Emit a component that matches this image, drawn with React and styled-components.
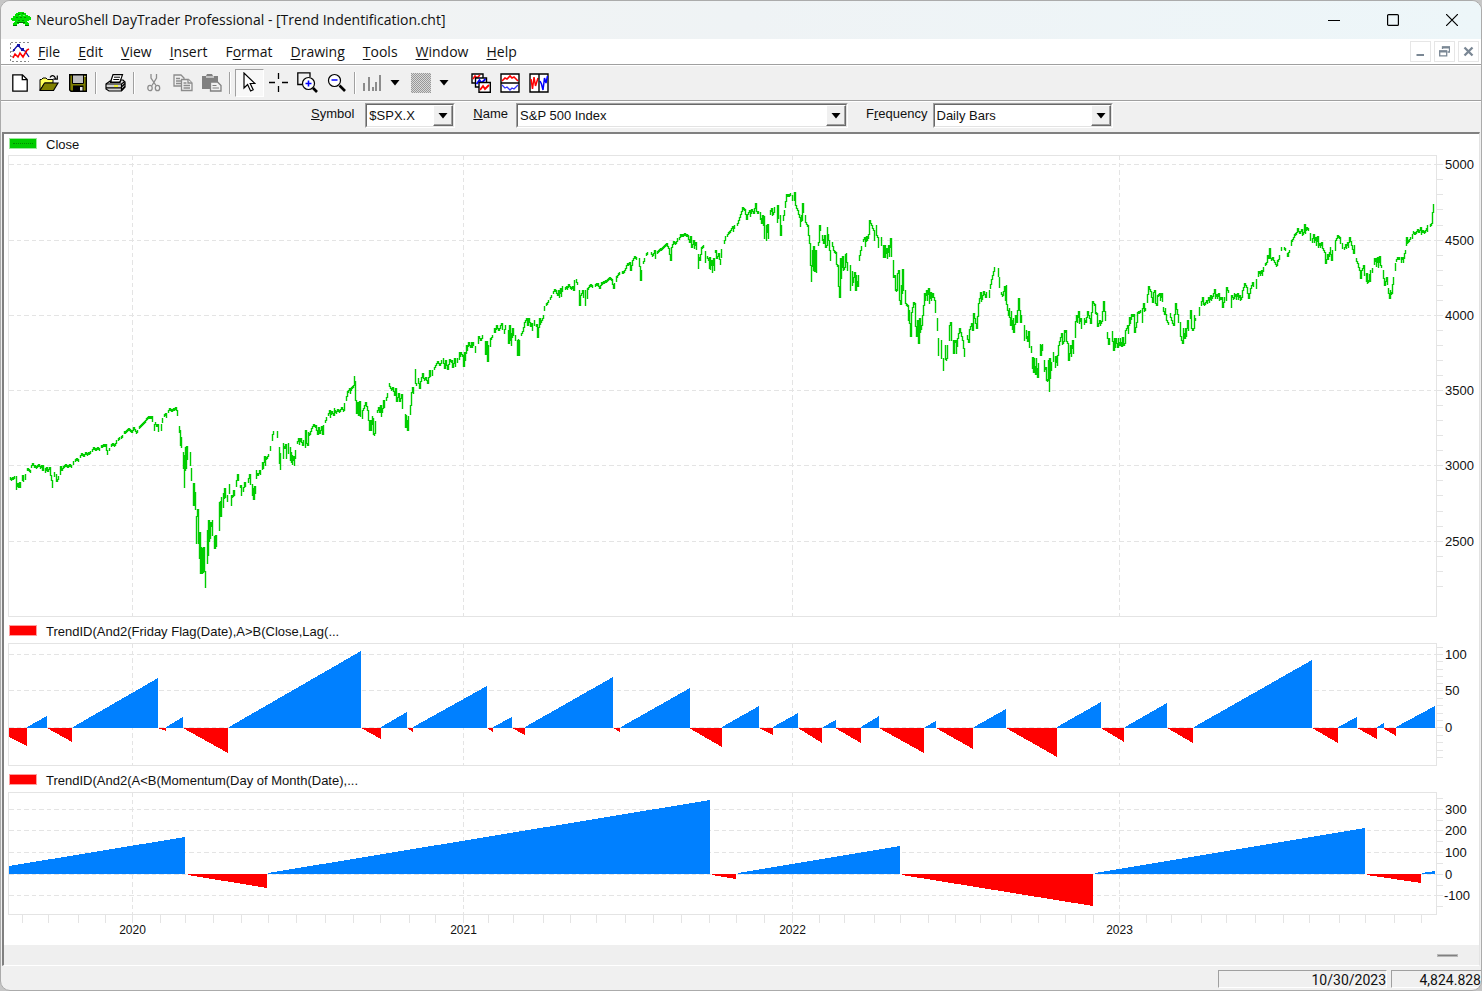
import React from "react";
import styled, { createGlobalStyle } from "styled-components";

// Color scheme
const faceColor = "#f0f0f0"; // toolbar and status bar grey
const shadowColor = "#a0a0a0"; // light edge of sunken borders
const darkShadow = "#696969"; // dark edge of sunken borders
const gridColor = "#e4e4e4"; // chart frames and grid lines
const priceColor = "#00cc00";
const upColor = "#0080ff";
const downColor = "#ff0000";

const uiFont = `"Open Sans", "Noto Sans", sans-serif`;
const chartFont = `"Liberation Sans", Arial, sans-serif`;

const GlobalStyle = createGlobalStyle`
  * {
    box-sizing: border-box;
  }

  body {
    margin: 0;
    background: #c6c6c6;
  }

  button,
  select {
    font: inherit;
    color: inherit;
  }
`;

// Window chrome
const AppWindow = styled.div`
  display: flex;
  flex-direction: column;
  min-height: 100vh;
  border: 1px solid #ababab;
  border-radius: 10px;
  background: ${faceColor};
  color: #111;
  font-family: ${uiFont};
  overflow: hidden;
`;

const TitleBar = styled.header`
  display: flex;
  align-items: center;
  height: 38px;
  padding-left: 10px;
  background: linear-gradient(90deg, #f3f3f3, #eff3f5 50%, #edf6f9);
`;

const Title = styled.h1`
  flex: 1;
  margin: 0 0 0 5px;
  font-size: 14px;
  font-weight: 400;
  line-height: 20px;
`;

const CaptionButton = styled.button`
  display: flex;
  align-items: center;
  justify-content: center;
  width: 59px;
  height: 38px;
  padding: 0;
  border: 0;
  background: transparent;
`;

const MenuBar = styled.nav`
  display: flex;
  align-items: center;
  height: 25px;
  padding: 0 2px 0 9px;
  background: #fff;
`;

const MenuItem = styled.button`
  padding: 0 10px 0 8px;
  border: 0;
  background: transparent;
  font-size: 14px;
  line-height: 20px;

  u {
    text-underline-offset: 2px;
  }
`;

const ChildButtons = styled.div`
  display: flex;
  gap: 3px;
  margin-left: auto;
`;

const ChildButton = styled.button`
  display: flex;
  align-items: center;
  justify-content: center;
  width: 21px;
  height: 21px;
  padding: 0;
  border: 1px solid #e6e6e6;
  background: #fff;
`;

// Toolbar
const Toolbar = styled.div`
  display: flex;
  align-items: center;
  height: 36px;
  padding-left: 4px;
  border-top: 1px solid ${shadowColor};
  box-shadow: inset 0 1px 0 #fff;
`;

const ToolButton = styled.button`
  display: flex;
  align-items: center;
  justify-content: center;
  width: ${({ $width }) => $width || 29}px;
  height: 28px;
  padding: 0;
  border: 1px solid;
  border-color: ${({ $pressed }) =>
    $pressed ? `${shadowColor} #fff #fff ${shadowColor}` : "transparent"};
  background: ${({ $pressed }) => ($pressed ? "#f8f8f8" : "transparent")};
`;

const Divider = styled.span`
  width: 2px;
  height: 22px;
  margin: 0 4px 0 3px;
  border-left: 1px solid ${shadowColor};
  border-right: 1px solid #fff;
`;

const ToolGap = styled.span`
  width: 13px;
`;

// Symbol bar
const SymbolBar = styled.div`
  display: flex;
  align-items: flex-start;
  height: 32px;
  padding: 2px 0 0 310px;
  border-top: 1px solid ${shadowColor};
  box-shadow: inset 0 1px 0 #fff;
  font-family: ${chartFont};
  font-size: 13px;
`;

const Field = styled.div`
  display: flex;
  margin-right: ${({ $gap }) => $gap}px;
`;

const FieldLabel = styled.label`
  margin-right: ${({ $gap }) => $gap}px;
  line-height: 22px;
`;

const Combo = styled.div`
  position: relative;
  width: ${({ $width }) => $width}px;
  height: 25px;
  border: 1px solid;
  border-color: ${shadowColor} #fff #fff ${shadowColor};
`;

const ComboSelect = styled.select`
  display: block;
  width: 100%;
  height: 23px;
  padding: 0 24px 0 2px;
  border: 1px solid;
  border-color: ${darkShadow} #e3e3e3 #e3e3e3 ${darkShadow};
  border-radius: 0;
  background: #fff;
  appearance: none;
  line-height: 20px;
`;

const ComboArrow = styled.span`
  position: absolute;
  top: 1px;
  right: 1px;
  display: flex;
  align-items: center;
  justify-content: center;
  width: 20px;
  height: 21px;
  border: 1px solid;
  border-color: #fff ${darkShadow} ${darkShadow} #fff;
  box-shadow: inset -1px -1px 0 ${shadowColor};
  background: ${faceColor};
  pointer-events: none;
`;

// Chart workspace
const Workspace = styled.main`
  flex: 1;
  display: flex;
  flex-direction: column;
  border-top: 2px solid #808080;
  border-left: 2px solid #808080;
  border-right: 1px solid #e3e3e3;
  border-bottom: 1px solid #fff;
  margin: 0 1px;
  background: #fff;
  font-family: ${chartFont};
`;

const Legend = styled.div`
  display: flex;
  align-items: center;
  gap: 9px;
  height: ${({ $first }) => ($first ? 21 : 26)}px;
  padding: ${({ $first }) => ($first ? 0 : 3)}px 0 0 5px;
  font-size: 13px;
  line-height: 20px;
`;

const Swatch = styled.span`
  display: flex;
  align-items: center;
  width: 28px;
  height: 11px;
  margin-bottom: 3px;
  border: 1px solid ${({ $color }) => ($color === priceColor ? "#9be89b" : "#ff9d9d")};
  background: ${({ $color }) => $color};

  &::after {
    content: "";
    flex: 1;
    margin: 0 3px;
    border-top: 1px dotted ${({ $color }) => ($color === priceColor ? "#008a00" : $color)};
  }
`;

const Panel = styled.section`
  display: flex;
  padding-left: 4px;
`;

const Plot = styled.svg`
  flex: 1;
  min-width: 0;
  height: ${({ $height }) => $height}px;
  display: block;
`;

const Scale = styled.svg`
  flex: none;
  width: 42px;
  height: ${({ $height }) => $height}px;
  display: block;
  font-family: ${chartFont};
  font-size: 13px;
`;

const TimeAxis = styled.svg`
  display: block;
  flex: 1;
  height: 30px;
  overflow: visible;
  font-family: ${chartFont};
  font-size: 12px;
`;

const AxisSpacer = styled.div`
  width: 42px;
`;

const ScrollStrip = styled.div`
  flex: 1;
  display: flex;
  align-items: center;
  justify-content: flex-end;
  min-height: 20px;
  padding-right: 21px;
  background: #efefef;
`;

const ScrollThumb = styled.span`
  width: 21px;
  height: 3px;
  border: 1px solid #b8b8b8;
  background: #808080;
`;

const StatusBar = styled.footer`
  display: flex;
  justify-content: flex-end;
  gap: 4px;
  height: 24px;
  padding-top: 4px;
  font-family: Roboto, ${chartFont};
  font-size: 14px;
`;

const StatusCell = styled.div`
  width: ${({ $width }) => $width}px;
  height: 18px;
  border: 1px solid;
  border-color: ${shadowColor} #fff #fff ${shadowColor};
  line-height: 18px;
  text-align: right;

  &:last-child {
    border-right: 0;
  }
`;

// Chart data. The horizontal range of every panel is 8 to 1437.
const LEFT = 8;
const SPAN = 1429;

const years = [
  { x: 132, label: "2020" },
  { x: 463, label: "2021" },
  { x: 792, label: "2022" },
  { x: 1119, label: "2023" },
];

const months = [
  22, 48, 78, 105, 132, 160, 185, 213, 241, 268, 296, 325, 353, 380, 409, 435,
  463, 488, 513, 543, 570, 596, 625, 653, 681, 709, 736, 764, 792, 819, 844,
  874, 900, 928, 955, 980, 1011, 1038, 1065, 1093, 1119, 1146, 1171, 1201,
  1226, 1255, 1283, 1309, 1339, 1365, 1394, 1421,
];

const pricePath = `
M10,477 L11,479 L13,477 L15,476 M16,476 V489 L18,483 L19,487 L20,482 V487 M22,480 L23,475 L24,481
M25,479 L26,474 M27,470 L28,468 L30,470 L31,472 M31,466 L33,463 L34,465 L37,466 L39,464 L40,466 L42,465
L43,470 L44,465 M45,468 V472 L47,467 L48,471 L50,467 L51,475 L52,480 L53,487 M54,476 L55,472 M56,474
L57,481 L59,476 M60,474 L61,466 L62,470 L64,466 L66,464 L68,466 L70,464 L72,465 M73,461 L74,464
M75,460 L77,458 L79,460 M80,457 L82,453 L84,455 L86,452 L88,453 L91,451 M92,450 L94,447 L96,449 L98,447
L100,449 M101,446 L104,444 L106,444 L107,450 L108,454 M109,450 L110,448 M111,444 L113,443 L115,445
L117,440 M118,439 L120,437 M121,436 L123,435 M124,432 L127,430 L129,428 L131,430 L132,432 L134,427
L136,431 L138,430 M139,427 L142,424 L144,422 L146,420 L147,418 L149,416 L152,416 L153,421 M154,430 V424
M155,422 L157,426 L158,424 L159,431 M161,430 V424 M162,422 L163,418 M164,415 L166,413 L167,417
M168,411 L170,408 L172,410 L174,408 L176,407 L177,410 L178,415
M179,426 V432 L180,430 V445 L181,437 V447 M183,452 V468 M184,487 V455 L185,470 L186,447 V468 L187,446
V459 M190,452 V465 M191,468 V480 M193,487 V505 L194,483 V505 L195,492 V509 M196,516 V543 L197,516
L198,509 V543 L199,532 V558 L200,532 V560 L201,573 V547 L202,573 L203,548 V572 L204,547 V571 M205,571 V587
M207,563 V548 L208,530 V555 L209,520 V541 L210,522 V538 L211,526 L212,522 V535 L213,520 M214,537 V548
L215,536 V548 L216,535 V546 M219,530 V514 L220,502 V516 L221,501 V516 L222,497 M223,493 V507 L225,488
V497 M227,495 V501 M229,484 V493 L230,486 M231,505 L232,495 L233,496 L234,490 L235,495 M236,486
L237,480 L238,474 L239,480 M240,485 L241,485 L242,495 M243,491 L245,482 L246,486 M248,482 L249,478
L250,474 L251,484 M252,484 V495 L253,488 V493 L254,499 L255,486 V493 M256,478 V470 L258,475 L260,470
L261,474 M262,469 L263,462 V468 L265,456 V465 M266,457 L268,456 L269,454 M270,450 L271,446 M272,440
L273,434 L274,431 M277,431 V437 M279,447 V463 L280,453 V467 L281,469 M283,458 V443 L285,448 L286,444
V458 M288,443 L289,453 M290,447 V460 L291,452 V462 L292,455 V464 L294,456 V465 L296,450 M297,443
L299,438 V444 L301,438 L303,445 L304,440 M305,447 L306,430 V440 L308,445 V432 L310,434 L312,428
L314,424 L316,425 L318,434 L319,427 L320,433 L322,426 L323,434 L324,425 M325,422 L327,417 M328,415
L330,410 V417 L332,411 L334,415 V408 L336,412 L338,409 L340,411 L342,407 L344,410 L345,403 M346,400
L348,391 L350,388 V393 L352,387 L354,385 V376 L355,381 V390 L356,400 L357,413 L358,402 L359,415
L360,401 V416 M362,418 L363,410 L365,405 L366,402 L368,410 L370,430 L371,420 V430 M372,416 V424
L373,418 V432 L375,433 L375,421 M377,412 L379,407 L380,412 L381,405 V416 L383,408 L384,400 L385,407
M386,400 L388,393 M389,383 L391,388 L393,387 L395,395 L396,388 L397,401 L399,393 L400,401 L402,394
L403,408 M405,414 V427 L406,415 V427 L407,420 L408,430 L409,416 M410,414 L411,405 L412,392 L413,387
L414,393 M415,369 V380 L417,385 M418,378 L420,388 L421,381 L423,373 L424,378 L426,377 L428,383
L430,370 V376 M432,375 L433,370 M434,369 L436,365 L438,361 L440,365 L442,360
M443,358 L445,368 L446,360 L448,369 L450,359 L452,360 L453,367 L455,358 V366 M457,358 L458,362
M459,359 L460,352 V356 L461,352 L463,355 L464,366 L465,352 V360 L467,345 V350 L469,342 L471,347
L472,342 V347 L474,342 M475,352 L476,346 M478,343 L479,336 L481,340 L483,335 M485,341 L486,354
L487,341 V353 L488,361 L489,345 M490,346 L491,338 L493,335 M494,332 L495,328 V332 L497,325 L499,330
L501,325 L502,323 L503,329 M504,333 L506,325 M508,330 L509,343 V326 L510,325 V340 L511,333 V345
L513,328 V335 L514,330 M515,335 V340 M517,340 L518,355 V339 L519,355 L520,340 M521,335 L523,331
L525,322 L527,318 L528,325 L529,318 L531,326 L532,323 V330 M534,320 V325 M536,325 L537,324 L538,337
L539,327 L540,318 V323 L542,320 L544,315 M544,310 L545,306 M546,304 L548,302 L549,300 M550,298
L552,295 M553,293 L555,289 L556,290 L558,295 L559,290 V297 L561,288 V296 L563,286 M565,287 L567,286
V289 L569,284 L571,288 L573,286 L574,290 L575,280 M576,279 L578,284 M579,290 L580,305 L581,295
L583,290 V297 M585,290 L586,305 M587,298 L588,288 L591,284 L593,286 M595,284 L598,283 L600,288
L602,282 L604,281 L606,280 L608,279 L610,277 L612,279 L614,288 L615,283 M616,281 L617,276 L620,272
M622,272 L625,270 L628,263 L630,262 L631,270 L633,260 L635,256 L637,258 M639,258 L640,266 L641,280
L642,270 M643,263 L645,258 M646,254 L648,252 M651,252 L653,255 L655,250 V258 M657,252 L659,250
L661,248 L663,247 L665,245 L667,243 L669,248 L671,260 L672,247 L674,241 L676,243 L678,238 M679,239
L681,234 L683,234 L685,233 L688,235 L690,242 L691,236 V245 L692,247 L694,240 V248 L696,242 V249
M698,268 V254 L700,260 L702,247 L704,245 M705,251 L706,262 M707,256 L709,260 V268 L710,257 V269
L712,260 V272 L714,258 V270 M715,252 L716,250 L717,258 L719,253 L721,264 M721,257 L722,249 M724,243
L726,236 M727,236 L729,232 L731,230 L733,226 V231 L735,225 M737,225 L739,220 L741,214 L743,207
L745,209 L747,219 L748,214 L750,210 V216 L752,209 L754,213 L756,203 L757,211 L759,211 M760,219 V212
L762,223 L763,215 V225 M764,238 V216 M766,225 V240 L768,224 V238 M770,210 V214 L772,208 V214 L774,212
L775,207 M777,213 V222 L778,205 V218 M780,215 V222 L781,235 L782,225 M783,220 L785,210 M785,207
L787,194 L788,195 L791,193 M792,200 V195 M794,193 V200 L795,192 L796,205 L798,210 L800,217 V226
L802,215 V220 L803,203 V212 M805,215 L806,222 L808,225 V232 L809,235 L810,243 L811,265 V281 L813,250
V270 L814,246 L815,271 L816,250 V272 M818,245 L819,242 L820,225 V230 M822,240 V235 L824,243 L825,235
V245 L827,245 V227 L829,240 L831,260 M832,242 L834,250 L836,252 V262 L838,265 V275 L840,297 V272
L841,258 V278 L843,256 V268 L845,267 V254 M846,253 L848,270 M850,265 V290 M852,285 V271 L853,282
L855,272 V285 L856,290 V275 L858,286 V275 M859,260 L861,250 L862,246 M863,240 L865,237 V246 L867,236
V240 M868,238 L869,234 L870,220 L872,225 L874,230 V240 M876,225 L877,235 L878,237 V247 M881,237 V245
M883,245 L884,257 L885,245 V257 L887,248 V258 L889,245 V256 L891,238 L892,256 M893,260 L894,277
L895,275 V288 L897,290 V275 L899,270 V296 L901,304 V285 M902,293 V286 L903,269 V290 M905,290 L906,303
L908,305 V320 M909,315 V310 L911,336 L912,312 L914,302 L915,303 V315 L917,336 L918,320 V330 L919,343
L920,318 V332 L922,325 L924,305 L925,293 V300 L927,290 V300 L929,288 V303 L931,292 V300 L933,293
L935,300 L936,312 M937,318 V330 M938,338 V355 M941,358 V340 L942,356 M943,358 V368 L944,370
M945,345 V357 L947,358 L948,345 M949,340 V328 L951,322 V340 M953,340 L954,353 V340 L956,340 V353
L958,338 L960,328 L963,340 L965,356 M967,335 L969,342 V332 L972,323 L973,330 L974,313 L977,328
L979,303 L981,292 V301 L982,299 L984,291 L986,297 V292 M989,290 V297 M990,288 L993,275 L995,267
M998,268 V276 M999,277 V287 M1001,292 L1003,295 L1005,286 L1006,300 V285 L1007,304 L1009,315 V308
L1011,325 V311 L1013,329 V318 L1014,332 L1016,315 L1017,322 L1019,298 L1021,322 L1022,315 M1024,325
V340 M1026,338 V330 L1028,341 L1029,331 V347 M1031,346 V352 M1032,357 V368 L1033,357 V370 L1034,372
V358 L1036,374 V358 L1038,377 V363 M1040,355 V344 L1041,345 V355 L1043,344 M1044,360 V370 L1046,367
V378 L1048,380 V368 L1049,360 V391 L1050,358 V378 L1052,362 M1053,352 V361 M1055,356 V367 L1057,356 V365
L1059,345 L1061,337 L1062,333 V343 L1064,341 V330 L1066,330 V338 L1068,343 L1069,360 L1071,345 V356
L1073,340 L1074,353 M1075,337 V327 L1077,315 V322 L1079,311 V323 L1081,318 L1082,328 M1084,324 V318
L1086,322 L1088,311 L1090,318 L1091,323 L1093,301 L1095,304 V311 L1097,313 L1098,326 L1100,320 V325
L1102,321 L1104,301 L1106,320 M1107,332 L1109,344 V338 M1112,331 L1114,350 V338 L1115,347 L1116,338
L1118,347 V338 L1120,345 V338 L1122,346 L1123,337 V343 L1125,343 L1126,330 L1128,325 V333 L1130,317
V323 L1132,314 L1134,314 L1135,332 L1137,322 L1138,312 L1141,310 M1142,322 L1143,308 L1144,303 V310
L1146,308 M1147,302 L1149,286 L1151,291 L1153,302 V293 L1155,290 V300 L1157,305 L1158,295 L1160,293
V300 L1162,293 V301 M1163,307 L1165,314 V308 L1167,320 L1169,323 M1170,313 L1172,320 L1174,325
L1176,303 L1178,314 L1179,322 M1180,322 L1181,336 L1183,343 V328 L1185,338 L1186,328 V336 L1188,320
V330 M1190,318 L1191,310 L1192,328 L1194,328 V315 L1196,320 M1199,315 L1200,307 M1201,305 L1203,297
V302 L1205,303 L1207,300 V303 L1209,297 V302 L1211,295 V300 L1213,296 L1215,289 V297 L1217,294 V298
L1219,293 V298 L1222,297 L1223,307 L1225,297 M1226,300 L1227,287 L1229,292 M1231,307 L1232,295
L1234,298 V293 L1236,294 V299 L1238,293 V299 L1240,295 V299 L1242,297 L1243,290 L1245,283 L1247,287
L1249,298 L1251,288 L1253,282 L1254,286 M1256,288 V279 M1258,276 V271 L1260,271 V275 L1262,270 V275
L1264,267 M1265,263 L1267,262 L1268,255 L1269,258 L1270,248 L1271,258 L1273,257 L1275,262 L1277,265
V260 L1279,259 L1280,255 M1281,250 L1282,247 M1284,247 L1286,248 M1287,253 L1288,256 L1289,252 L1290,250
M1291,245 L1292,240 L1294,237 L1295,234 L1297,232 L1298,228 L1300,233 L1302,229 V234 L1304,232
L1305,224 V233 L1307,227 L1309,228 M1310,233 V240 M1312,242 L1314,234 V242 L1316,237 V245 L1318,236
V247 L1320,243 V247 L1322,242 L1323,248 L1325,252 L1326,263 L1328,254 V259 L1330,252 V247 L1332,260
L1333,250 M1335,250 L1336,240 L1338,235 L1340,237 L1341,243 M1342,243 V248 M1344,249 L1346,244 V248
L1348,242 V247 L1350,237 L1352,245 L1354,253 L1355,245 M1356,258 L1358,263 L1360,270 L1361,278
L1362,270 L1364,265 V272 L1365,275 M1366,281 L1367,273 V282 L1369,280 V274 L1370,281 V270 M1372,272
L1373,268 M1374,258 V264 L1376,258 V266 L1378,257 V267 L1380,256 V263 L1382,267 M1383,270 L1384,278
L1385,285 L1387,277 V284 M1388,288 L1390,298 V290 L1392,293 L1393,284 L1394,277 M1395,270 V263
M1396,261 L1398,257 L1400,257 M1401,262 V257 L1403,257 V262 L1405,253 L1406,250 M1406,245 L1407,237
V241 L1409,240 L1411,237 M1412,234 V238 M1413,231 L1416,233 L1418,229 L1419,232 L1421,227 V233 L1423,230
L1425,232 L1427,228 V231 L1428,225 M1430,224 L1432,223 L1433,212 M1433,212 L1434,204`;

// Turn the outline above into one upright bar for each column it crosses
const toBars = (path) => {
  const bars = [];
  let x = 0;
  let y = 0;

  path.match(/[MLV][\d,]+/g).forEach((step) => {
    const [first, second] = step.slice(1).split(",").map(Number);
    const nextX = step[0] === "V" ? x : first;
    const nextY = step[0] === "V" ? first : second;

    if (step[0] !== "M") {
      const columns = Math.max(nextX - x, 1);
      for (let i = 0; i < columns; i += 1) {
        const from = y + ((nextY - y) * i) / columns;
        const to = y + ((nextY - y) * (i + 1)) / columns;
        const low = Math.round(Math.min(from, to));
        const high = Math.max(Math.round(Math.max(from, to)), low + 2);
        bars.push(`M${x + i + 0.5},${low} V${high + 1}`);
      }
    }
    x = nextX;
    y = nextY;
  });

  return bars.join(" ");
};

const priceBars = toBars(pricePath);

// Each run is [start x, end x, start y, end y], measured from the zero line.
const fastRuns = [
  [9, 27, 737, 746], [27, 47, 727, 716], [47, 72, 728, 742],
  [73, 158, 727, 678], [158, 166, 728, 731], [166, 183, 727, 717],
  [183, 228, 728, 753], [229, 361, 727, 651], [361, 381, 728, 739],
  [381, 407, 727, 712], [407, 413, 728, 732], [413, 487, 727, 686],
  [487, 493, 728, 732], [493, 512, 727, 717], [512, 525, 728, 735],
  [525, 613, 727, 677], [613, 620, 728, 732], [621, 690, 727, 688],
  [689, 722, 728, 747], [722, 759, 727, 706], [759, 773, 728, 735],
  [773, 798, 727, 713], [798, 822, 728, 743], [823, 836, 727, 720],
  [835, 861, 728, 743], [861, 879, 727, 716], [879, 924, 728, 753],
  [925, 936, 727, 721], [936, 973, 728, 749], [974, 1006, 727, 709],
  [1006, 1057, 728, 757], [1057, 1101, 727, 702], [1101, 1124, 728, 742],
  [1125, 1167, 727, 703], [1167, 1193, 728, 743], [1194, 1312, 727, 660],
  [1312, 1338, 728, 743], [1338, 1357, 727, 717], [1357, 1377, 728, 739],
  [1377, 1384, 727, 723], [1383, 1396, 728, 736], [1396, 1435, 727, 706],
];

const slowRuns = [
  [9, 185, 866, 837], [188, 267, 875, 888], [268, 710, 873, 800],
  [712, 736, 875, 879], [738, 900, 873, 846], [902, 1093, 875, 906],
  [1095, 1365, 873, 828], [1367, 1421, 875, 883], [1422, 1435, 873, 871],
];

const panels = [
  {
    id: "close",
    name: "Close",
    color: priceColor,
    top: 155,
    height: 462,
    labels: [[164, "5000"], [240, "4500"], [315, "4000"], [390, "3500"], [465, "3000"], [541, "2500"]],
    ticks: [179, 194, 209, 225, 255, 270, 285, 300, 330, 345, 360, 375, 405, 420, 435, 450, 480, 495, 511, 526, 556, 571, 586],
  },
  {
    id: "fast",
    name: "TrendID(And2(Friday Flag(Date),A>B(Close,Lag(...",
    color: downColor,
    top: 643,
    height: 123,
    zero: 728,
    runs: fastRuns,
    labels: [[654, "100"], [690, "50"], [727, "0"]],
    ticks: [647, 661, 669, 676, 683, 698, 705, 713, 720, 735, 742, 750, 757],
  },
  {
    id: "slow",
    name: "TrendID(And2(A<B(Momentum(Day of Month(Date),...",
    color: downColor,
    top: 792,
    height: 123,
    zero: 874,
    runs: slowRuns,
    labels: [[809, "300"], [830, "200"], [852, "100"], [874, "0"], [895, "-100"]],
    ticks: [798, 820, 841, 863, 885, 906],
  },
];

const ChartPanel = ({ panel, first }) => {
  const { top, height, labels, ticks, runs, zero } = panel;
  const bottom = top + height - 1;

  return (
    <>
      <Legend $first={first}>
        <Swatch $color={panel.color} />
        {panel.name}
      </Legend>
      <Panel aria-label={panel.name}>
        <Plot
          $height={height}
          viewBox={`${LEFT} ${top} ${SPAN} ${height}`}
          preserveAspectRatio="none"
          shapeRendering="crispEdges"
        >
          <g stroke={gridColor} strokeDasharray="4.5 3">
            {labels.map(([y]) => (
              <path key={y} d={`M9,${y + 0.5} H1436`} />
            ))}
            {years.map(({ x }) => (
              <path key={x} d={`M${x + 0.5},${top} V${bottom}`} />
            ))}
          </g>
          <rect x="8.5" y={top + 0.5} width="1428" height={height - 1} fill="none" stroke={gridColor} />
          {runs &&
            runs.map(([x1, x2, y1, y2]) => (
              <polygon
                key={x1}
                points={`${x1},${zero} ${x1},${y1} ${x2},${y2} ${x2},${zero}`}
                fill={y2 < zero ? upColor : downColor}
              />
            ))}
          {!runs && (
            <path d={priceBars} fill="none" stroke={priceColor} strokeWidth="1.4" shapeRendering="auto" />
          )}
        </Plot>
        <Scale $height={height} viewBox={`0 ${top} 42 ${height}`}>
          <g stroke={gridColor} shapeRendering="crispEdges">
            {ticks.map((y) => (
              <path key={y} d={`M0,${y + 0.5} H6`} />
            ))}
            {labels.map(([y]) => (
              <path key={y} d={`M0,${y + 0.5} H6`} />
            ))}
          </g>
          {labels.map(([y, text]) => (
            <text key={y} x={text.startsWith("-") ? 7 : 8} y={y + 5} fill="#111">
              {text}
            </text>
          ))}
        </Scale>
      </Panel>
    </>
  );
};

const percent = (x) => `${((x + 0.5 - LEFT) / SPAN) * 100}%`;

const YearAxis = () => (
  <Panel>
    <TimeAxis>
      {months.map((x) => (
        <line key={x} x1={percent(x)} x2={percent(x)} y1="0" y2="8" stroke={gridColor} shapeRendering="crispEdges" />
      ))}
      {years.map(({ x, label }) => (
        <text key={x} x={percent(x)} y="19" textAnchor="middle" fill="#111">
          {label}
        </text>
      ))}
    </TimeAxis>
    <AxisSpacer />
  </Panel>
);

// Icons
const TurtleIcon = () => (
  <svg width="20" height="16" viewBox="0 0 20 16" shapeRendering="crispEdges">
    <path d="M7 0h6v1h2v2h2v1h2v1h1v3h-2v1h-2v1h1v1h1v3h-4v-2h-2v-2H8v2H6v2H2v-3h1v-1h1V9H1V8H0V6h2V4h2V2h1V1h2z" fill="#00e000" />
    <path d="M7 2h2v1H7zM11 1h2v1h-2zM5 5h2v1H5zM9 5h2v1H9zM13 5h2v1h-2zM7 8h2v1H7zM11 8h2v1h-2z" fill="#009400" />
    <path d="M2 13h4v1H2zM14 13h4v1h-4zM6 10h8v1H6z" fill="#007000" />
    <path d="M8 3h2v1H8zM12 3h2v1h-2z" fill="#5cff5c" />
  </svg>
);

const ChildIcon = () => (
  <svg width="20" height="20" viewBox="0 0 20 20">
    <path d="M1 .5h18M.5 1v18M2 19.500h17" stroke="#888" strokeDasharray="2 2" fill="none" />
    <path d="M1 9.500h3M1 14.500h3" stroke="#999" fill="none" />
    <path d="M3 9l5-6 4 5 3 1 4 6" stroke="#1414a8" strokeWidth="1.300" fill="none" />
    <path d="M3 7h2v2H3zM7 2h3v3H7zM11 6h3v3h-3z" fill="#1414a8" />
    <path d="M3 16l2-4 3 3 2-4 3 4 4-7 2-1" stroke="#f00" strokeWidth="1.600" fill="none" />
  </svg>
);

const NewIcon = () => (
  <svg width="16" height="18" viewBox="0 0 16 18">
    <path d="M.8.8h9.700l4.700 4.700v11.700H.8z" fill="#fff" stroke="#000" strokeWidth="1.300" />
    <path d="M10.300 1v4.700H15" fill="none" stroke="#000" strokeWidth="1.300" />
  </svg>
);

const OpenIcon = () => (
  <svg width="20" height="18" viewBox="0 0 20 18">
    <path d="M1 16V5.500h1.500L4 4h3l1.500 1.500H14V9H6z" fill="#ffff5a" stroke="#000" strokeWidth="1" />
    <path d="M1 16.500L5.500 9H19l-4.500 7.500z" fill="#808000" stroke="#000" strokeWidth="1.200" />
    <path d="M11 3.500C12.500.8 15.500 1 16.500 4.500M18.300 1.500v3.700h-4" fill="none" stroke="#000" strokeWidth="1.200" />
  </svg>
);

const SaveIcon = () => (
  <svg width="18" height="18" viewBox="0 0 18 18">
    <path d="M.7.7h16.600v16.600H2L.7 16z" fill="#808000" stroke="#000" strokeWidth="1.400" />
    <path d="M3.500 1h11v8.500h-11z" fill="#c0c0c0" stroke="#000" strokeWidth="1" />
    <path d="M4 11.500h10.500V17H4z" fill="#000" />
    <path d="M11 13h2.500v3.500H11z" fill="#e8e8e8" />
    <path d="M15.500 2h1v1h-1z" fill="#fff" />
  </svg>
);

const PrintIcon = () => (
  <svg width="21" height="18" viewBox="0 0 21 18">
    <path d="M5.500 8L8 .7h9.500L15 8z" fill="#fff" stroke="#000" strokeWidth="1.200" />
    <path d="M9 3.200h6M8.300 5.500h6" stroke="#000" strokeWidth="1" />
    <path d="M1 10l4-3h1l-.5 1.500H15l.8-2.500H18l2 2v5l-3.500 4H4l-3-2z" fill="#d4d4d4" stroke="#000" strokeWidth="1.200" />
    <path d="M1 10h15.500l3.500-2.500M16.500 10v7M1 13.800h15.500" fill="none" stroke="#000" strokeWidth="1.200" />
    <path d="M17 12.500l3-3M17 15.500l3-3" stroke="#000" strokeWidth="1.400" />
    <path d="M9 11.200h4v1.600H9z" fill="#ffff00" />
  </svg>
);

const CutIcon = () => (
  <svg width="14" height="19" viewBox="0 0 14 19" fill="none" stroke="#8c8c8c" strokeWidth="1.300">
    <path d="M4 1v4l5 7.500M9.500 1v4L5 12.500" />
    <ellipse cx="3" cy="15" rx="2.200" ry="2.700" />
    <ellipse cx="10.500" cy="15" rx="2.200" ry="2.700" />
  </svg>
);

const CopyIcon = () => (
  <svg width="20" height="18" viewBox="0 0 20 18" fill="#f0f0f0" stroke="#8c8c8c" strokeWidth="1.300">
    <path d="M1 1h7l3 3v8H1z" />
    <path d="M3 4.500h4M3 7h6M3 9.500h6" />
    <path d="M8.500 5.500h7L19 9v7.500H8.500z" />
    <path d="M15 5.500V9h4M10.500 9h3M10.500 11.500h6.500M10.500 14h6.500" />
  </svg>
);

const PasteIcon = () => (
  <svg width="21" height="19" viewBox="0 0 21 19">
    <path d="M1 3h4l1-2h5l1 2h5v13H1z" fill="#808080" />
    <path d="M5 4h8" stroke="#d8d8d8" strokeWidth="1.400" />
    <path d="M9.500 9h7l3.500 3.500V18H9.500z" fill="#f0f0f0" stroke="#808080" strokeWidth="1.300" />
    <path d="M11.500 12.500h4M11.500 15h6.500" stroke="#808080" />
  </svg>
);

const PointerIcon = () => (
  <svg width="13" height="21" viewBox="0 0 13 21">
    <path d="M1 1v15l3.600-3.500 3 6.500 2.600-1.200-3-6.300H12z" fill="#fff" stroke="#000" strokeWidth="1.200" />
  </svg>
);

const CrossIcon = () => (
  <svg width="19" height="19" viewBox="0 0 19 19" stroke="#000" strokeWidth="1.300">
    <path d="M9.500 0v6M9.500 13v6M0 9.500h6M13 9.500h6" />
  </svg>
);

const ZoomAreaIcon = () => (
  <svg width="21" height="21" viewBox="0 0 21 21" fill="none">
    <path d="M5 12.500H.8V.8H13V5" stroke="#000" strokeWidth="1.300" />
    <circle cx="11.500" cy="11.500" r="6" fill="#fff" stroke="#000" strokeWidth="1.200" />
    <path d="M8.500 11.500h6M11.500 8.500v6" stroke="#00f" strokeWidth="1.600" />
    <path d="M16 16l4 4" stroke="#000" strokeWidth="2.600" />
  </svg>
);

const ZoomOutIcon = () => (
  <svg width="19" height="19" viewBox="0 0 19 19" fill="none">
    <circle cx="7.500" cy="7.500" r="6" fill="#fff" stroke="#000" strokeWidth="1.200" />
    <path d="M4.500 7h6" stroke="#00f" strokeWidth="1.600" />
    <path d="M12.500 12.500l5.500 5.500" stroke="#000" strokeWidth="2.600" />
  </svg>
);

const BarsIcon = () => (
  <svg width="18" height="18" viewBox="0 0 18 18" fill="#8c8c8c" shapeRendering="crispEdges">
    <path d="M0 9h2v8H0zM5 3h2v14H5zM9 13h2v4H9zM12 8h2v9h-2zM16 1h2v16h-2z" />
  </svg>
);

const HatchIcon = () => (
  <svg width="20" height="20" viewBox="0 0 20 20" shapeRendering="crispEdges">
    <defs>
      <pattern id="hatch" width="2" height="2" patternUnits="userSpaceOnUse">
        <path d="M0 0h1v1H0zM1 1h1v1H1z" fill="#989898" />
      </pattern>
    </defs>
    <rect width="20" height="20" fill="#d8d8d8" />
    <rect width="20" height="20" fill="url(#hatch)" />
  </svg>
);

const ArrowIcon = () => (
  <svg width="10" height="6" viewBox="0 0 10 6">
    <path d="M.5 0h9L5 5.500z" fill="#000" />
  </svg>
);

const CascadeIcon = () => (
  <svg width="20" height="20" viewBox="0 0 20 20" fill="#fff" stroke="#000" strokeWidth="1.400">
    <path d="M1 1h11v9H1z" />
    <path d="M2 6l2-3 2 2 3-3" stroke="#f00" strokeWidth="1.600" />
    <path d="M4.500 5h11v9h-11z" />
    <path d="M5.500 11l3-4 2 3 4-4" stroke="#00f" strokeWidth="1.800" />
    <path d="M8 9.500h11.300v9.800H8z" />
    <path d="M9 17l3-4 2 3 4-4" fill="none" stroke="#f00" strokeWidth="1.800" />
  </svg>
);

const SplitIcon = () => (
  <svg width="20" height="20" viewBox="0 0 20 20" fill="none">
    <path d="M1 1h18v18H1z" fill="#fff" stroke="#000" strokeWidth="1.400" />
    <path d="M1 10h18" stroke="#000" strokeWidth="1.500" />
    <path d="M2 8l3-3 2 1 3-3 2 2 2-1 4 4" stroke="#f00" strokeWidth="1.600" />
    <path d="M2 12l3 3 2-1 3 3 2-2 2 1 4-4" stroke="#33f" strokeWidth="1.300" />
  </svg>
);

const SideIcon = () => (
  <svg width="20" height="20" viewBox="0 0 20 20" fill="none">
    <path d="M1 1h18v18H1z" fill="#fff" stroke="#000" strokeWidth="1.400" />
    <path d="M2 6l1.500 10L5 4l1.500 9L9 5" stroke="#f00" strokeWidth="1.500" />
    <path d="M11 8l1.500 3 1.500 6 1.500-12L17 10l1.500-7" stroke="#00f" strokeWidth="1.500" />
    <path d="M10 1v18" stroke="#000" strokeWidth="1.400" />
  </svg>
);

const menus = [
  ["", "F", "ile"],
  ["", "E", "dit"],
  ["", "V", "iew"],
  ["", "I", "nsert"],
  ["F", "o", "rmat"],
  ["", "D", "rawing"],
  ["", "T", "ools"],
  ["", "W", "indow"],
  ["", "H", "elp"],
];

const App = () => {
  return (
    <>
      <GlobalStyle />
      <AppWindow>
        <TitleBar>
          <TurtleIcon />
          <Title>NeuroShell DayTrader Professional - [Trend Indentification.cht]</Title>
          <CaptionButton aria-label="Minimize">
            <svg width="12" height="12" viewBox="0 0 12 12">
              <path d="M0 6.500h12" stroke="#000" />
            </svg>
          </CaptionButton>
          <CaptionButton aria-label="Maximize">
            <svg width="12" height="12" viewBox="0 0 12 12">
              <rect x=".6" y=".6" width="10.800" height="10.800" rx="1" fill="none" stroke="#000" strokeWidth="1.200" />
            </svg>
          </CaptionButton>
          <CaptionButton aria-label="Close">
            <svg width="12" height="12" viewBox="0 0 12 12">
              <path d="M0 0l12 12M12 0L0 12" stroke="#000" strokeWidth="1.200" />
            </svg>
          </CaptionButton>
        </TitleBar>

        <MenuBar>
          <ChildIcon />
          {menus.map(([before, key, after]) => (
            <MenuItem key={before + key + after}>
              {before}
              <u>{key}</u>
              {after}
            </MenuItem>
          ))}
          <ChildButtons>
            <ChildButton aria-label="Minimize chart">
              <svg width="11" height="11" viewBox="0 0 11 11">
                <path d="M1.500 9H9" stroke="#7a8794" strokeWidth="2" />
              </svg>
            </ChildButton>
            <ChildButton aria-label="Restore chart">
              <svg width="11" height="11" viewBox="0 0 11 11" fill="none" stroke="#7a8794">
                <path d="M3.500 3V1h7v5H8.500" strokeWidth="1.300" />
                <path d="M3 1.500h8M0 5.500h8" strokeWidth="1.800" />
                <path d="M.7 5h7v4.800h-7z" strokeWidth="1.300" />
              </svg>
            </ChildButton>
            <ChildButton aria-label="Close chart">
              <svg width="11" height="11" viewBox="0 0 11 11">
                <path d="M1.500 1.500l8 8M9.500 1.500l-8 8" stroke="#7a8794" strokeWidth="2.300" />
              </svg>
            </ChildButton>
          </ChildButtons>
        </MenuBar>

        <Toolbar>
          <ToolButton aria-label="New"><NewIcon /></ToolButton>
          <ToolButton aria-label="Open"><OpenIcon /></ToolButton>
          <ToolButton aria-label="Save"><SaveIcon /></ToolButton>
          <Divider />
          <ToolButton aria-label="Print"><PrintIcon /></ToolButton>
          <Divider />
          <ToolButton aria-label="Cut"><CutIcon /></ToolButton>
          <ToolButton aria-label="Copy"><CopyIcon /></ToolButton>
          <ToolButton aria-label="Paste"><PasteIcon /></ToolButton>
          <Divider />
          <ToolButton aria-label="Pointer" $pressed><PointerIcon /></ToolButton>
          <ToolButton aria-label="Crosshair"><CrossIcon /></ToolButton>
          <ToolButton aria-label="Zoom area"><ZoomAreaIcon /></ToolButton>
          <ToolButton aria-label="Zoom out"><ZoomOutIcon /></ToolButton>
          <Divider />
          <ToolButton aria-label="Bar style" $width={24}><BarsIcon /></ToolButton>
          <ToolButton aria-label="Bar style options" $width={22}><ArrowIcon /></ToolButton>
          <ToolButton aria-label="Pattern"><HatchIcon /></ToolButton>
          <ToolButton aria-label="Pattern options" $width={18}><ArrowIcon /></ToolButton>
          <ToolGap />
          <ToolButton aria-label="Cascade charts"><CascadeIcon /></ToolButton>
          <ToolButton aria-label="Stack charts"><SplitIcon /></ToolButton>
          <ToolButton aria-label="Charts side by side"><SideIcon /></ToolButton>
        </Toolbar>

        <SymbolBar>
          <Field $gap={18}>
            <FieldLabel htmlFor="symbol" $gap={11}><u>S</u>ymbol</FieldLabel>
            <Combo $width={90}>
              <ComboSelect id="symbol"><option>$SPX.X</option></ComboSelect>
              <ComboArrow><ArrowIcon /></ComboArrow>
            </Combo>
          </Field>
          <Field $gap={18}>
            <FieldLabel htmlFor="name" $gap={8}><u>N</u>ame</FieldLabel>
            <Combo $width={332}>
              <ComboSelect id="name"><option>S&amp;P 500 Index</option></ComboSelect>
              <ComboArrow><ArrowIcon /></ComboArrow>
            </Combo>
          </Field>
          <Field $gap={0}>
            <FieldLabel htmlFor="frequency" $gap={5}>F<u>r</u>equency</FieldLabel>
            <Combo $width={180}>
              <ComboSelect id="frequency"><option>Daily Bars</option></ComboSelect>
              <ComboArrow><ArrowIcon /></ComboArrow>
            </Combo>
          </Field>
        </SymbolBar>

        <Workspace>
          {panels.map((panel, index) => (
            <ChartPanel key={panel.id} panel={panel} first={index === 0} />
          ))}
          <YearAxis />
          <ScrollStrip>
            <ScrollThumb />
          </ScrollStrip>
        </Workspace>

        <StatusBar>
          <StatusCell $width={169}>10/30/2023</StatusCell>
          <StatusCell $width={90}>4,824.828</StatusCell>
        </StatusBar>
      </AppWindow>
    </>
  );
};

export default App;
